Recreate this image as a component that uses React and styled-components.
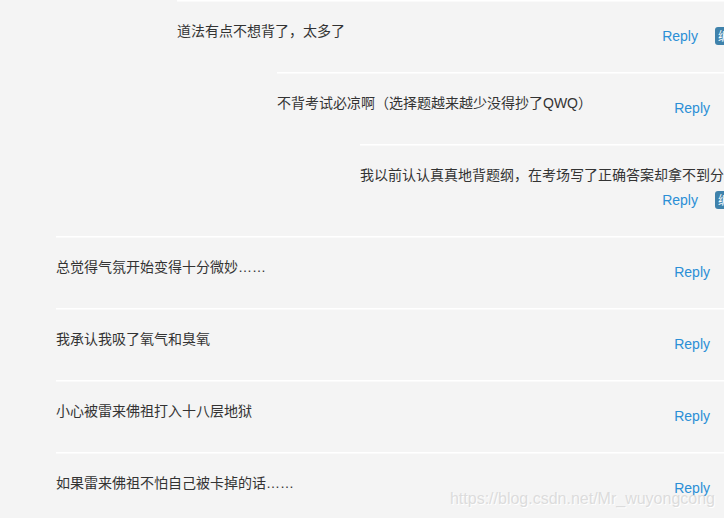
import React from "react";
import styled, { createGlobalStyle } from "styled-components";

const comments = [
  { text: "道法有点不想背了，太多了", indent: 177, badge: true },
  { text: "不背考试必凉啊（选择题越来越少没得抄了QWQ）", indent: 277 },
  {
    text: "我以前认认真真地背题纲，在考场写了正确答案却拿不到分",
    indent: 360,
    badge: true,
    wide: true,
  },
  { text: "总觉得气氛开始变得十分微妙……", indent: 56 },
  { text: "我承认我吸了氧气和臭氧", indent: 56 },
  { text: "小心被雷来佛祖打入十八层地狱", indent: 56 },
  { text: "如果雷来佛祖不怕自己被卡掉的话……", indent: 56 },
];

const App = () => {
  return (
    <Page>
      <GlobalStyle />
      <List>
        {comments.map((c, i) => (
          <Row key={i} $indent={c.indent}>
            <Text>{c.text}</Text>
            <Actions $badge={c.badge} $wide={c.wide}>
              <Reply href="#">Reply</Reply>
              {c.badge && <Badge>编辑</Badge>}
            </Actions>
          </Row>
        ))}
      </List>
      <Watermark>https://blog.csdn.net/Mr_wuyongcong</Watermark>
    </Page>
  );
};
export default App;

const GlobalStyle = createGlobalStyle`
  html, body {
    margin: 0;
    padding: 0;
    background: #f4f4f4;
    overflow: hidden;
  }
`;

const Page = styled.div`
  position: relative;
  width: 724px;
  height: 518px;
  overflow: hidden;
  background: #f4f4f4;
  font-family: "Liberation Sans", "Noto Sans CJK SC", sans-serif;
`;

const List = styled.div`
  display: flex;
  flex-direction: column;
`;

const Row = styled.div`
  display: flex;
  flex-wrap: wrap;
  align-items: flex-start;
  margin-left: ${props => props.$indent}px;
  padding: 20px 0 26px;
  border-top: 1px solid #ffffff;
  box-shadow: inset 0 1px 0 #fafafa;
`;

const Text = styled.div`
  font-size: 14px;
  line-height: 20px;
  color: #333;
  white-space: nowrap;
`;

const Actions = styled.div`
  display: flex;
  align-items: center;
  gap: 17px;
  margin-left: auto;
  margin-top: 5px;
  margin-right: ${props => (props.$badge ? -21 : 14)}px;
  ${props => props.$wide && "flex-basis: 100%; justify-content: flex-end;"}
`;

const Reply = styled.a`
  font-size: 14px;
  line-height: 20px;
  color: #2b8fd6;
  text-decoration: none;
`;

const Badge = styled.span`
  display: inline-block;
  height: 18px;
  line-height: 18px;
  padding: 0 3px;
  border-radius: 3px;
  background: #3f82ab;
  color: #fff;
  font-size: 12px;
  font-family: "Noto Sans CJK SC", sans-serif;
`;

const Watermark = styled.div`
  position: absolute;
  right: 9px;
  bottom: 10px;
  font-size: 16px;
  color: #dcdcdc;
  text-shadow: 1px 1px 0 #fff;
  pointer-events: none;
`;
